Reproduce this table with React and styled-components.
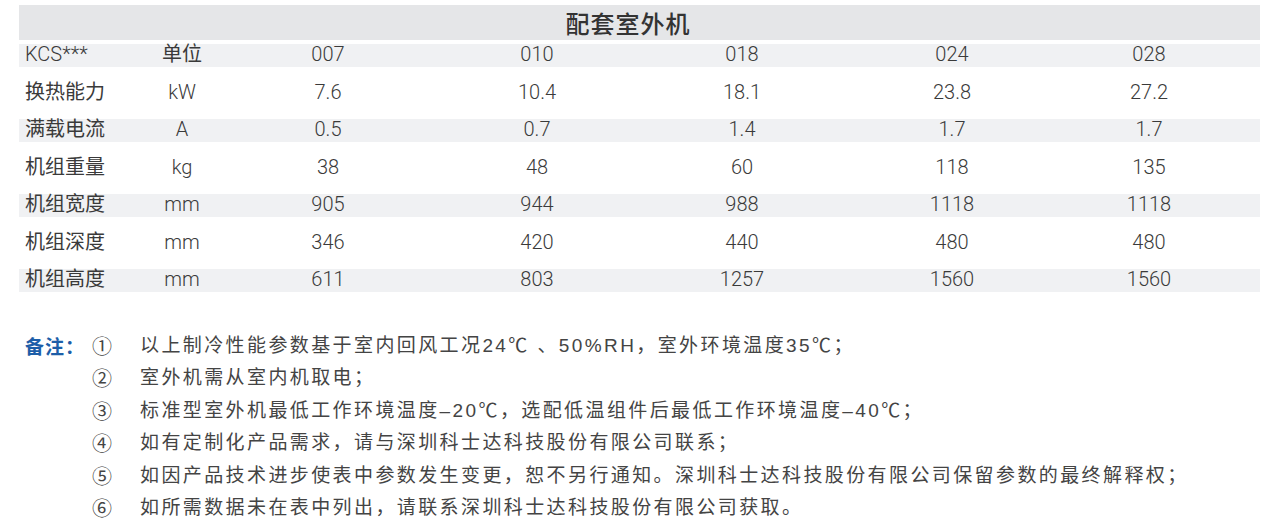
import React from "react";
import styled, { createGlobalStyle } from "styled-components";

const Global = createGlobalStyle`
  html, body { margin: 0; padding: 0; background: #ffffff; }
  body { font-family: "Liberation Sans", "Noto Sans CJK SC", sans-serif; color: #3f3f3f; }
`;

const Page = styled.div`
  width: 1275px;
  padding: 5px 15px 0 19px;
  box-sizing: border-box;
`;

const TitleBar = styled.div`
  height: 35px;
  background: #e5e6e8;
  display: flex;
  align-items: center;
  justify-content: center;
  font-family: "Noto Sans CJK SC", sans-serif;
  font-size: 24px;
  font-weight: 500;
  color: #333;
  letter-spacing: 1px;
  padding-right: 23px;
`;

const Grid = styled.div`
  display: grid;
  grid-template-columns: 101px 124px 168px 250px 160px 260px 134px 1fr;
  grid-auto-rows: 23px;
  row-gap: 14.5px;
  margin-top: 4px;
`;

const Cell = styled.div`
  grid-row: ${(p) => p.$row};
  background: ${(p) => (p.$shade ? "#f0f1f3" : "#ffffff")};
  font-family: Roboto, "Noto Sans CJK SC", sans-serif;
  font-weight: ${(p) => (p.$cjk ? 400 : 300)};
  font-size: 20px;
  line-height: 18px;
  padding-top: 1px;
  padding-left: ${(p) => (p.$left ? "6px" : "0")};
  text-align: ${(p) => (p.$left ? "left" : "center")};
  color: #3a3a3a;
  white-space: nowrap;
`;

const Notes = styled.div`
  display: grid;
  grid-template-columns: 67px 48px 1fr;
  grid-auto-rows: 32.4px;
  margin-top: 38px;
  padding-left: 6px;
  font-family: "Noto Sans CJK SC", sans-serif;
  font-size: 19px;
  line-height: 32.4px;
  color: #444;
`;

const NoteLabel = styled.div`
  grid-column: 1;
  grid-row: 1;
  color: #1d5ea8;
  font-weight: 700;
  letter-spacing: 1px;
`;

const NoteNum = styled.div`
  grid-column: 2;
  grid-row: ${(p) => p.$row};
  font-size: 20px;
  color: #444;
`;

const NoteText = styled.div`
  grid-column: 3;
  grid-row: ${(p) => p.$row};
  font-family: "Liberation Sans", "Noto Sans CJK SC", sans-serif;
  letter-spacing: 2.4px;
  white-space: nowrap;
`;

const rows = [
  ["KCS***", "单位", "007", "010", "018", "024", "028"],
  ["换热能力", "kW", "7.6", "10.4", "18.1", "23.8", "27.2"],
  ["满载电流", "A", "0.5", "0.7", "1.4", "1.7", "1.7"],
  ["机组重量", "kg", "38", "48", "60", "118", "135"],
  ["机组宽度", "mm", "905", "944", "988", "1118", "1118"],
  ["机组深度", "mm", "346", "420", "440", "480", "480"],
  ["机组高度", "mm", "611", "803", "1257", "1560", "1560"],
];

const notes = [
  ["①", "以上制冷性能参数基于室内回风工况24℃ 、50%RH，室外环境温度35℃；"],
  ["②", "室外机需从室内机取电；"],
  ["③", "标准型室外机最低工作环境温度–20℃，选配低温组件后最低工作环境温度–40℃；"],
  ["④", "如有定制化产品需求，请与深圳科士达科技股份有限公司联系；"],
  ["⑤", "如因产品技术进步使表中参数发生变更，恕不另行通知。深圳科士达科技股份有限公司保留参数的最终解释权；"],
  ["⑥", "如所需数据未在表中列出，请联系深圳科士达科技股份有限公司获取。"],
];

const hasCjk = (s) => /[\u4e00-\u9fff]/.test(s);

export default function App() {
  return (
    <Page>
      <Global />
      <TitleBar>配套室外机</TitleBar>
      <Grid>
        {rows.map((r, i) => (
          <React.Fragment key={i}>
            {r.map((c, j) => (
              <Cell key={j} $row={i + 1} $shade={i % 2 === 0} $left={j === 0} $cjk={hasCjk(c)}>
                {c}
              </Cell>
            ))}
            <Cell $row={i + 1} $shade={i % 2 === 0} />
          </React.Fragment>
        ))}
      </Grid>
      <Notes>
        <NoteLabel>备注：</NoteLabel>
        {notes.map(([n, t], i) => (
          <React.Fragment key={i}>
            <NoteNum $row={i + 1}>{n}</NoteNum>
            <NoteText $row={i + 1}>{t}</NoteText>
          </React.Fragment>
        ))}
      </Notes>
    </Page>
  );
}
